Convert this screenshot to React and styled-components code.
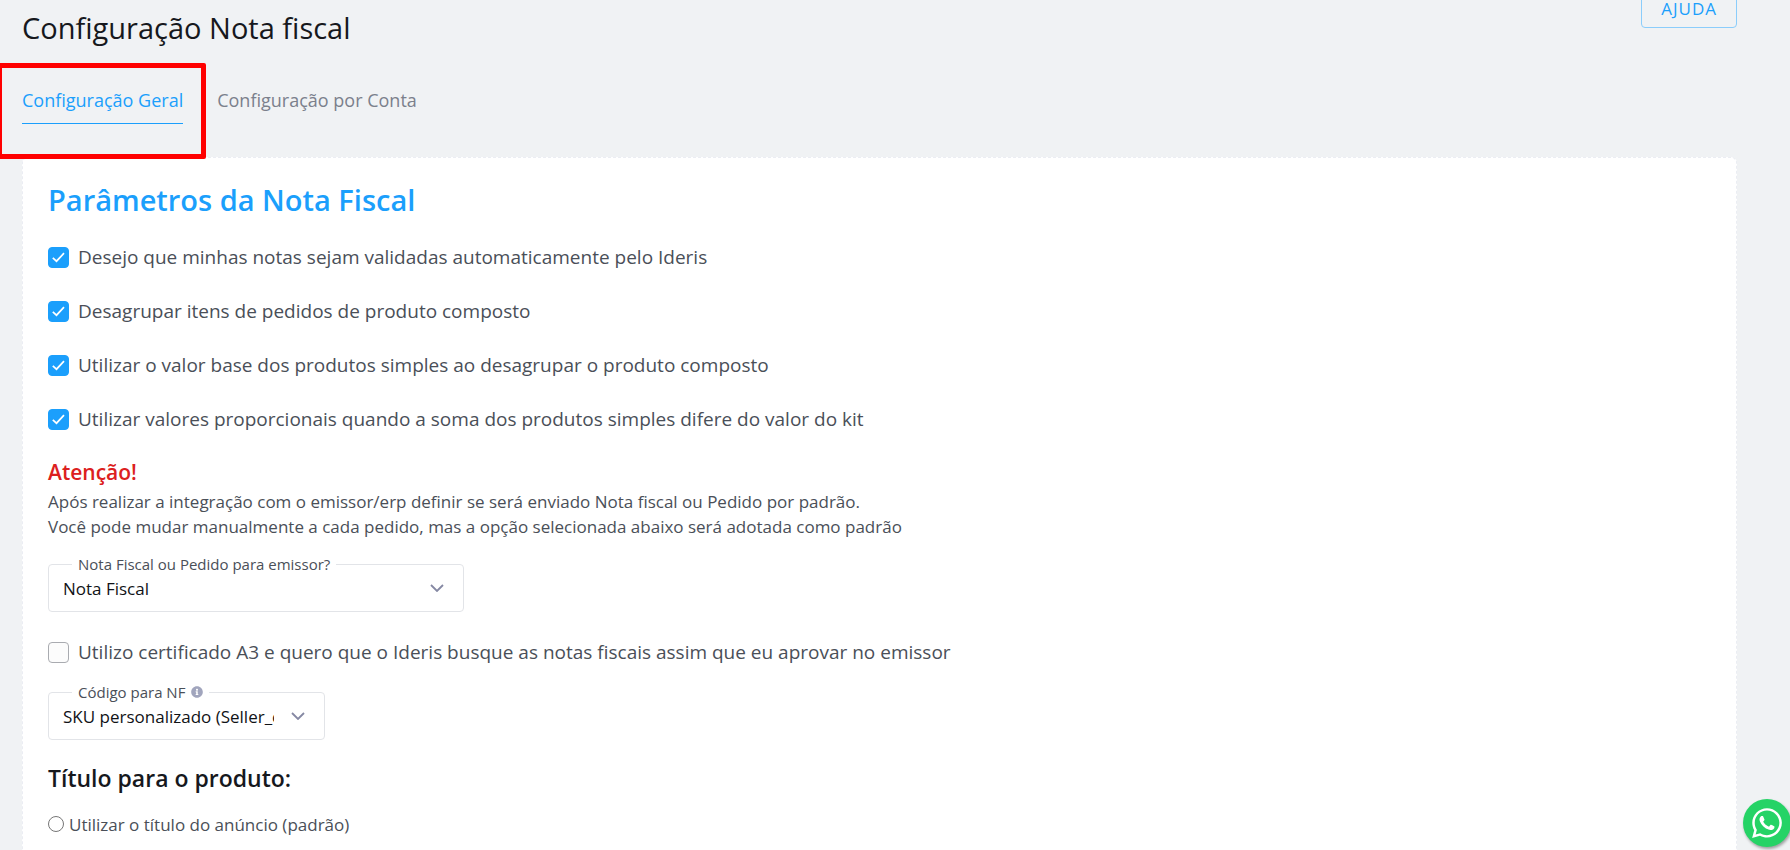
import React, { useState } from 'react'
import styled, { createGlobalStyle } from 'styled-components'
import { FaInfoCircle, FaWhatsapp } from 'react-icons/fa'

const GlobalStyle = createGlobalStyle`
  * {
    box-sizing: border-box;
  }
  body {
    margin: 0;
    background: #f0f2f4;
    color: #4a4f58;
    font-family: 'Open Sans', 'Noto Sans', sans-serif;
    font-size: 17px;
  }
`

const parametros = [
  { id: 'validar', label: 'Desejo que minhas notas sejam validadas automaticamente pelo Ideris' },
  { id: 'desagrupar', label: 'Desagrupar itens de pedidos de produto composto' },
  { id: 'valorBase', label: 'Utilizar o valor base dos produtos simples ao desagrupar o produto composto' },
  {
    id: 'proporcional',
    label: 'Utilizar valores proporcionais quando a soma dos produtos simples difere do valor do kit',
  },
]

const Checkbox = ({ id, label, checked, onChange }) => {
  return (
    <CheckRow htmlFor={id}>
      <CheckHolder>
        <CheckInput type="checkbox" id={id} checked={checked} onChange={onChange} />
        {checked && (
          <CheckMark viewBox="0 0 21 21" aria-hidden="true">
            <path d="M4.8 10.8 L8.5 14.2 L16 6.2" />
          </CheckMark>
        )}
      </CheckHolder>
      {label}
    </CheckRow>
  )
}

const SelectField = ({ id, label, options, width, info }) => {
  return (
    <Field $width={width}>
      <FieldLabel htmlFor={id}>
        {label}
        {info && <FaInfoCircle />}
      </FieldLabel>
      <Select id={id}>
        {options.map((item) => (
          <option key={item}>{item}</option>
        ))}
      </Select>
      <Arrow viewBox="0 0 14 8" aria-hidden="true">
        <path d="M1 1 L7 7 L13 1" />
      </Arrow>
    </Field>
  )
}

const App = () => {
  const [values, setValues] = useState({
    validar: true,
    desagrupar: true,
    valorBase: true,
    proporcional: true,
    certificado: false,
  })

  const toggle = (id) => setValues({ ...values, [id]: !values[id] })

  return (
    <Page>
      <GlobalStyle />
      <Header>
        <Title>Configuração Nota fiscal</Title>
        <HelpButton type="button">AJUDA</HelpButton>
      </Header>

      <Tabs>
        <Tab href="#geral" $active>
          Configuração Geral
          <Highlight />
        </Tab>
        <Tab href="#conta">Configuração por Conta</Tab>
      </Tabs>

      <Card>
        <CardTitle>Parâmetros da Nota Fiscal</CardTitle>
        <CheckList>
          {parametros.map(({ id, label }) => (
            <Checkbox key={id} id={id} label={label} checked={values[id]} onChange={() => toggle(id)} />
          ))}
        </CheckList>

        <Warning>Atenção!</Warning>
        <Text>
          Após realizar a integração com o emissor/erp definir se será enviado Nota fiscal ou Pedido por padrão.
          <br />
          Você pode mudar manualmente a cada pedido, mas a opção selecionada abaixo será adotada como padrão
        </Text>

        <SelectField
          id="emissor"
          label="Nota Fiscal ou Pedido para emissor?"
          options={['Nota Fiscal', 'Pedido']}
          width="416px"
        />
        <Checkbox
          id="certificado"
          label="Utilizo certificado A3 e quero que o Ideris busque as notas fiscais assim que eu aprovar no emissor"
          checked={values.certificado}
          onChange={() => toggle('certificado')}
        />
        <SelectField
          id="codigo"
          label="Código para NF"
          options={['SKU personalizado (Seller_custom_field)', 'SKU do produto']}
          width="277px"
          info
        />

        <Subtitle>Título para o produto:</Subtitle>
        <RadioRow>
          <RadioInput type="radio" name="titulo" value="anuncio" />
          Utilizar o título do anúncio (padrão)
        </RadioRow>
      </Card>

      <WhatsappButton type="button" aria-label="WhatsApp">
        <FaWhatsapp />
      </WhatsappButton>
    </Page>
  )
}

const Page = styled.div`
  display: flex;
  flex-direction: column;
  min-height: 100vh;
  padding: 0 53px 0 22px;
`

const Header = styled.header`
  display: flex;
  justify-content: space-between;
  align-items: flex-start;
  padding-top: 8px;
`

const Title = styled.h1`
  margin: 0;
  color: #16181d;
  font-size: 29px;
  font-weight: 400;
  line-height: 40px;
`

const HelpButton = styled.button`
  height: 38px;
  margin-top: -18px;
  padding: 0 19px 2px;
  background: transparent;
  border: 1px solid #8bcdfb;
  border-radius: 4px;
  color: #1b9ffc;
  font-family: inherit;
  font-size: 17px;
  letter-spacing: 1px;
  cursor: pointer;
`

const Tabs = styled.nav`
  display: flex;
  gap: 34px;
  margin-top: 32px;
`

const Tab = styled.a`
  position: relative;
  height: 44px;
  border-bottom: 1px solid ${({ $active }) => ($active ? '#1b9ffc' : 'transparent')};
  color: ${({ $active }) => ($active ? '#1b9ffc' : '#7b808c')};
  font-size: 18px;
  line-height: 40px;
  text-decoration: none;
`

const Highlight = styled.span`
  position: absolute;
  top: -17px;
  left: -25px;
  right: -23px;
  height: 96px;
  border: 5px solid #ff0000;
  border-radius: 2px;
  pointer-events: none;
`

const Card = styled.main`
  flex: 1;
  margin-top: 33px;
  padding: 24px 25px 8px;
  background: #ffffff;
  border: 1px dashed #ebedf3;
  border-bottom: 0;
  border-radius: 6px 6px 0 0;
`

const CardTitle = styled.h2`
  margin: 0 0 19px;
  color: #1b9ffc;
  font-size: 29px;
  font-weight: 600;
  line-height: 36px;
`

const CheckList = styled.div`
  display: grid;
  gap: 14px;
`

const CheckRow = styled.label`
  display: flex;
  align-items: center;
  gap: 9px;
  min-height: 40px;
  font-size: 19px;
  line-height: 24px;
  cursor: pointer;
`

const CheckHolder = styled.span`
  position: relative;
  display: flex;
`

const CheckInput = styled.input`
  appearance: none;
  width: 21px;
  height: 21px;
  margin: 0;
  background: #fcfcfc;
  border: 1px solid #a9abb0;
  border-radius: 4px;

  &:checked {
    background: #1b9ffc;
    border-color: #1b9ffc;
  }
`

const CheckMark = styled.svg`
  position: absolute;
  inset: 0;
  fill: none;
  stroke: #ffffff;
  stroke-width: 1.7;
  pointer-events: none;
`

const Warning = styled.h3`
  margin: 19px 0 3px;
  color: #dc2020;
  font-size: 21px;
  font-weight: 600;
  line-height: 28px;
`

const Text = styled.p`
  margin: 0 0 25px;
  line-height: 25px;
`

const Field = styled.div`
  position: relative;
  width: ${({ $width }) => $width};
  max-width: 100%;
  margin: 20px 0;
`

const FieldLabel = styled.label`
  position: absolute;
  top: -10px;
  left: 24px;
  display: flex;
  align-items: center;
  gap: 6px;
  padding: 0 6px;
  background: #ffffff;
  font-size: 15px;
  line-height: 20px;

  svg {
    width: 12px;
    height: 12px;
    color: #a1a5bd;
  }
`

const Select = styled.select`
  display: block;
  appearance: none;
  width: 100%;
  height: 48px;
  padding: 0 50px 0 14px;
  background: transparent;
  border: 1px solid #e2e4e8;
  border-radius: 4px;
  color: #101216;
  font-family: inherit;
  font-size: 17px;
`

const Arrow = styled.svg`
  position: absolute;
  top: 20px;
  right: 20px;
  width: 14px;
  height: 8px;
  fill: none;
  stroke: #8588a3;
  stroke-width: 1.8;
  pointer-events: none;
`

const Subtitle = styled.h3`
  margin: 23px 0 18px;
  color: #16181d;
  font-size: 23px;
  font-weight: 600;
  line-height: 30px;
`

const RadioRow = styled.label`
  display: flex;
  align-items: center;
  gap: 5px;
  line-height: 28px;
`

const RadioInput = styled.input`
  width: 16px;
  height: 16px;
  margin: 0 0 3px;
`

const WhatsappButton = styled.button`
  position: fixed;
  right: -1px;
  bottom: 3px;
  display: grid;
  place-items: center;
  width: 48px;
  height: 48px;
  padding: 0;
  background: #25d366;
  border: 0;
  border-radius: 50%;
  box-shadow: 1px 2px 3px rgba(0, 0, 0, 0.35);
  color: #ffffff;
  font-size: 34px;
  cursor: pointer;
`

export default App
